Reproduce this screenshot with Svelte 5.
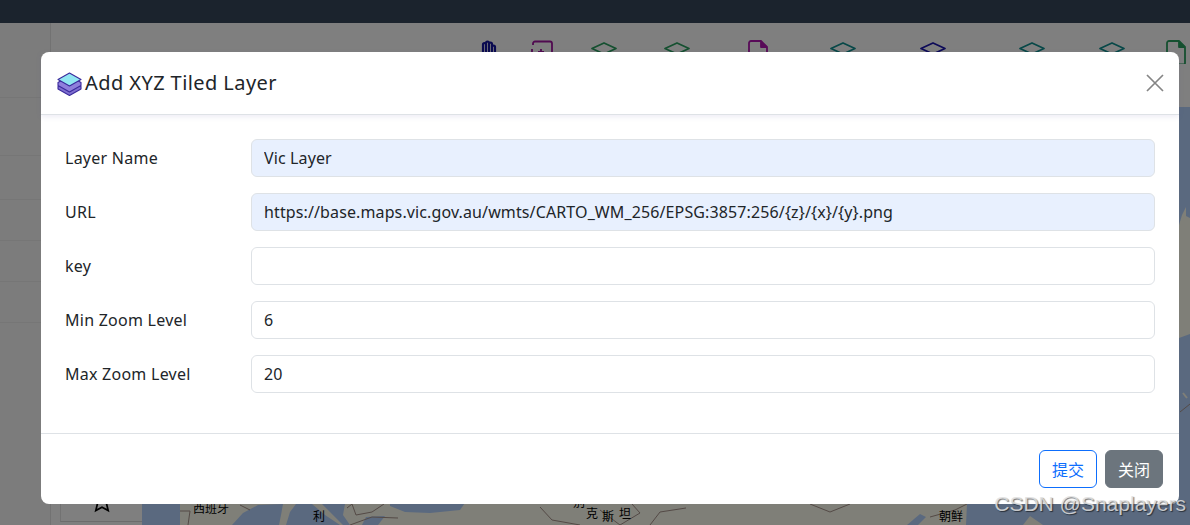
<script lang="ts">
  // Add-layer dialog on top of the dimmed map page.
  const sideRows = [75, 58, 44, 41, 41, 41];

  const tools = [
    { kind: 'hand', w: 54, color: '#1414a0' },
    { kind: 'docplus', w: 54, color: '#a014a0' },
    { kind: 'layer', w: 72, color: '#2aa060' },
    { kind: 'layer', w: 74, color: '#2aa060' },
    { kind: 'doc', w: 88, color: '#b014b0' },
    { kind: 'layer', w: 82, color: '#109090' },
    { kind: 'layer', w: 98, color: '#1a14b0' },
    { kind: 'layer', w: 100, color: '#109090' },
    { kind: 'layer', w: 60, color: '#109090' },
    { kind: 'doc', w: 68, color: '#2aa060' }
  ];

  const fields = [
    { label: 'Layer Name', value: 'Vic Layer', filled: true },
    { label: 'URL', value: 'https://base.maps.vic.gov.au/wmts/CARTO_WM_256/EPSG:3857:256/{z}/{x}/{y}.png', filled: true },
    { label: 'key', value: '', filled: false },
    { label: 'Min Zoom Level', value: '6', filled: false },
    { label: 'Max Zoom Level', value: '20', filled: false }
  ];

  const places = [
    { t: '西班牙', x: 193, y: 513 },
    { t: '利', x: 313, y: 521 },
    { t: '大', x: 296, y: 503 },
    { t: '别', x: 573, y: 507 },
    { t: '克', x: 586, y: 518 },
    { t: '斯', x: 602, y: 521 },
    { t: '坦', x: 619, y: 518 },
    { t: '朝鲜', x: 939, y: 521 }
  ];

  const seas = [
    'M142 107H1190V207H1186L1182 215 1179 225V525H966L967 504H180V525H142Z',
    'M1179 338 1190 334V525H1179Z',
    'M232 525 243 513 258 505 283 504 281 515 279 525Z',
    'M286 525 290 512 296 504 312 504 325 515 340 525Z',
    'M322 504H345L343 515 350 525H343L330 512Z',
    'M390 500H467L460 510 430 513 405 512 390 506Z',
    'M362 525 366 517 385 516 378 525Z',
    'M907 525 920 514 926 517 918 525Z',
    'M1186 207 1190 205V218L1186 216Z'
  ];
</script>

<div class="page">
  <header class="topbar"></header>
  <div class="main">
    <aside class="side">
      {#each sideRows as h}
        <div class="side-row" style="height: {h}px"></div>
      {/each}
    </aside>
    <div class="content">
      <div class="toolbar">
        {#each tools as tool}
          <div class="tool" style="width: {tool.w}px; color: {tool.color}">
            <svg width="28" height="24" viewBox="0 0 28 24" fill="none" stroke="currentColor" stroke-width="1.800" stroke-linejoin="round">
              {#if tool.kind === 'layer'}
                <path d="M14 3 26 8.500 14 14 2 8.500Z" />
              {:else if tool.kind === 'doc'}
                <path d="M7 1h10l6 6v16a1.500 1.500 0 0 1-1.500 1.500H7A2 2 0 0 1 5 23V3a2 2 0 0 1 2-2Z" />
                <path d="M17 1v6h6" fill="currentColor" />
              {:else if tool.kind === 'docplus'}
                <path d="M6 5V3.500A2 2 0 0 1 8 1.500h15a2 2 0 0 1 2 2V22H5" />
                <path d="M5 9v3M14 9v6M11 12h6" />
              {:else}
                <path stroke-width="2.200" d="M6 24V12M10 24V4.500a1.500 1.500 0 0 1 3 0V24M13 24V3a1.500 1.500 0 0 1 3 0v21M16 24V4a1.500 1.500 0 0 1 3 0v20M19 24V7a1.500 1.500 0 0 1 3 0v17" />
              {/if}
            </svg>
          </div>
        {/each}
      </div>
      <div class="work">
        <div class="panel">
          <div class="panel-item">
            <svg width="24" height="22" viewBox="0 0 24 22" fill="none" stroke="#000" stroke-width="1.700">
              <path d="M12 2 14.800 8 22 8.700 16.600 13 18.200 19.500 12 16.200 5.800 19.500 7.400 13 2 8.700 9.200 8Z" />
            </svg>
          </div>
        </div>
        <svg class="map" viewBox="142 107 1048 418" preserveAspectRatio="none">
          <rect x="142" y="107" width="1048" height="418" fill="#fefef0" />
          {#each seas as d}
            <path fill="#b4d2ff" {d} />
          {/each}
          <path fill="none" stroke="#a8948c" stroke-width="1" d="M180 511H190L188 525M240 505 250 510M347 508 352 504 356 515 372 512 384 504M350 525 372 517 398 518M540 507 552 520 580 525M600 510 620 525 640 513 632 504M650 525 660 512 686 508M810 504 830 512 850 504M930 517 955 510 967 504M1180 412 1190 404" />
          <path fill="none" stroke="#fefef0" stroke-width="2" d="M1183 393 1187 398" />
          <path fill="#fefef0" d="M1023 525 1030 516 1043 525Z" />
          {#each places as p}
            <text x={p.x} y={p.y} class="place">{p.t}</text>
          {/each}
        </svg>
      </div>
    </div>
  </div>

  <div class="backdrop">
    <div class="modal">
      <div class="modal-head">
        <svg class="layers-icon" width="25" height="24" viewBox="0 0 25 24" stroke="#3a2a9c" stroke-width="1.100" stroke-linejoin="round">
          <path d="M1 14.500 12.500 8 24 14.500V17L12.500 23.500 1 17Z" fill="#7f6fd0" />
          <path d="M1 10.500 12.500 4 24 10.500V13.500L12.500 20 1 13.500Z" fill="#8f7fdc" />
          <path d="M1 7.500 12.500 1 24 7.500 12.500 14Z" fill="#90e6f2" />
        </svg>
        <h5>Add XYZ Tiled Layer</h5>
        <button class="close" aria-label="Close">
          <svg width="18" height="18" viewBox="0 0 18 18" stroke="#858585" stroke-width="1.700" fill="none">
            <path d="M1 1 17 17M17 1 1 17" />
          </svg>
        </button>
      </div>
      <form class="modal-body">
        {#each fields as f}
          <div class="row">
            <label for={f.label}>{f.label}</label>
            <input id={f.label} class:filled={f.filled} value={f.value} />
          </div>
        {/each}
      </form>
      <div class="modal-foot">
        <button class="btn primary">提交</button>
        <button class="btn secondary">关闭</button>
      </div>
    </div>
  </div>

  <div class="watermark">CSDN @Snaplayers</div>
</div>

<style>
  :global(body) {
    margin: 0;
  }
  .page {
    position: relative;
    width: 1190px;
    height: 525px;
    overflow: hidden;
    display: flex;
    flex-direction: column;
    background: #fff;
    font-family: "Noto Sans", "Noto Sans CJK SC", sans-serif;
    color: #212529;
  }
  .topbar {
    height: 23px;
    flex: none;
    background: #36465a;
  }
  .main {
    flex: 1;
    display: flex;
    min-height: 0;
  }
  .side {
    width: 51px;
    flex: none;
    box-sizing: border-box;
    border-right: 1px solid #e4e4e4;
    background: #f9f9f9;
  }
  .side-row {
    box-sizing: border-box;
    border-bottom: 1px solid #ececec;
  }
  .content {
    flex: 1;
    display: flex;
    flex-direction: column;
    min-width: 0;
  }
  .toolbar {
    height: 84px;
    flex: none;
    display: flex;
    padding: 17px 0 0 409px;
    box-sizing: border-box;
    overflow: hidden;
  }
  .tool {
    flex: none;
    display: flex;
    justify-content: center;
    align-items: flex-start;
  }
  .work {
    flex: 1;
    display: flex;
    min-height: 0;
  }
  .panel {
    width: 91px;
    flex: none;
    display: flex;
    flex-direction: column;
    justify-content: flex-end;
    padding-left: 9px;
    box-sizing: border-box;
  }
  .panel-item {
    height: 44px;
    margin-bottom: 3px;
    border-left: 1px solid #e4e4e4;
    border-bottom: 1px solid #d8d8d8;
    display: flex;
    justify-content: center;
    align-items: flex-start;
    box-sizing: border-box;
    padding-top: 13px;
  }
  .map {
    flex: 1;
    min-width: 0;
    height: 100%;
    display: block;
  }
  .place {
    font-family: "Noto Sans CJK SC", sans-serif;
    font-size: 12px;
    fill: #000;
  }
  .backdrop {
    position: absolute;
    inset: 0;
    background: rgba(0, 0, 0, 0.5);
    padding: 52px 11px 21px 41px;
    box-sizing: border-box;
  }
  .modal {
    height: 100%;
    background: #fff;
    border-radius: 8px;
    display: flex;
    flex-direction: column;
    box-sizing: border-box;
  }
  .modal-head {
    height: 63px;
    flex: none;
    box-sizing: border-box;
    display: flex;
    align-items: center;
    padding: 0 16px;
    border-bottom: 1px solid #dee2e6;
    box-shadow: 0 2px 5px rgba(90, 80, 160, 0.1);
  }
  .layers-icon {
    flex: none;
    margin-top: 1px;
    margin-right: 3px;
  }
  h5 {
    margin: 0;
    font-size: 20px;
    font-weight: 400;
    line-height: 1.5;
    letter-spacing: 0.42px;
    flex: 1;
  }
  .close {
    border: 0;
    background: none;
    padding: 0;
    margin-right: -1px;
    width: 18px;
    height: 18px;
    display: flex;
  }
  .modal-body {
    flex: 1;
    padding: 24px 24px 0;
    display: flex;
    flex-direction: column;
    gap: 16px;
  }
  .row {
    display: grid;
    grid-template-columns: 186px 1fr;
    align-items: center;
  }
  label {
    font-size: 16px;
    letter-spacing: 0.25px;
  }
  input {
    height: 38px;
    box-sizing: border-box;
    width: 100%;
    padding: 0 12px;
    border: 1px solid #dee2e6;
    border-radius: 6px;
    background: #fff;
    font: inherit;
    font-size: 16px;
    letter-spacing: 0.12px;
    color: #212529;
    outline: none;
  }
  input.filled {
    background: #e8f0fe;
  }
  .modal-foot {
    flex: none;
    display: flex;
    justify-content: flex-end;
    gap: 8px;
    padding: 16px;
    border-top: 1px solid #dee2e6;
  }
  .btn {
    width: 58px;
    height: 38px;
    box-sizing: border-box;
    border-radius: 6px;
    font: inherit;
    font-size: 16px;
    padding: 0;
  }
  .primary {
    background: #fff;
    border: 1px solid #0d6efd;
    color: #0d6efd;
  }
  .secondary {
    background: #6c757d;
    border: 1px solid #6c757d;
    color: #fff;
  }
  .watermark {
    position: absolute;
    right: 4px;
    bottom: 9px;
    font-family: "Liberation Sans", sans-serif;
    font-size: 21px;
    line-height: 24px;
    color: rgba(225, 225, 225, 0.85);
    text-shadow: 1px 1px 1px rgba(0, 0, 0, 0.55);
  }
</style>
